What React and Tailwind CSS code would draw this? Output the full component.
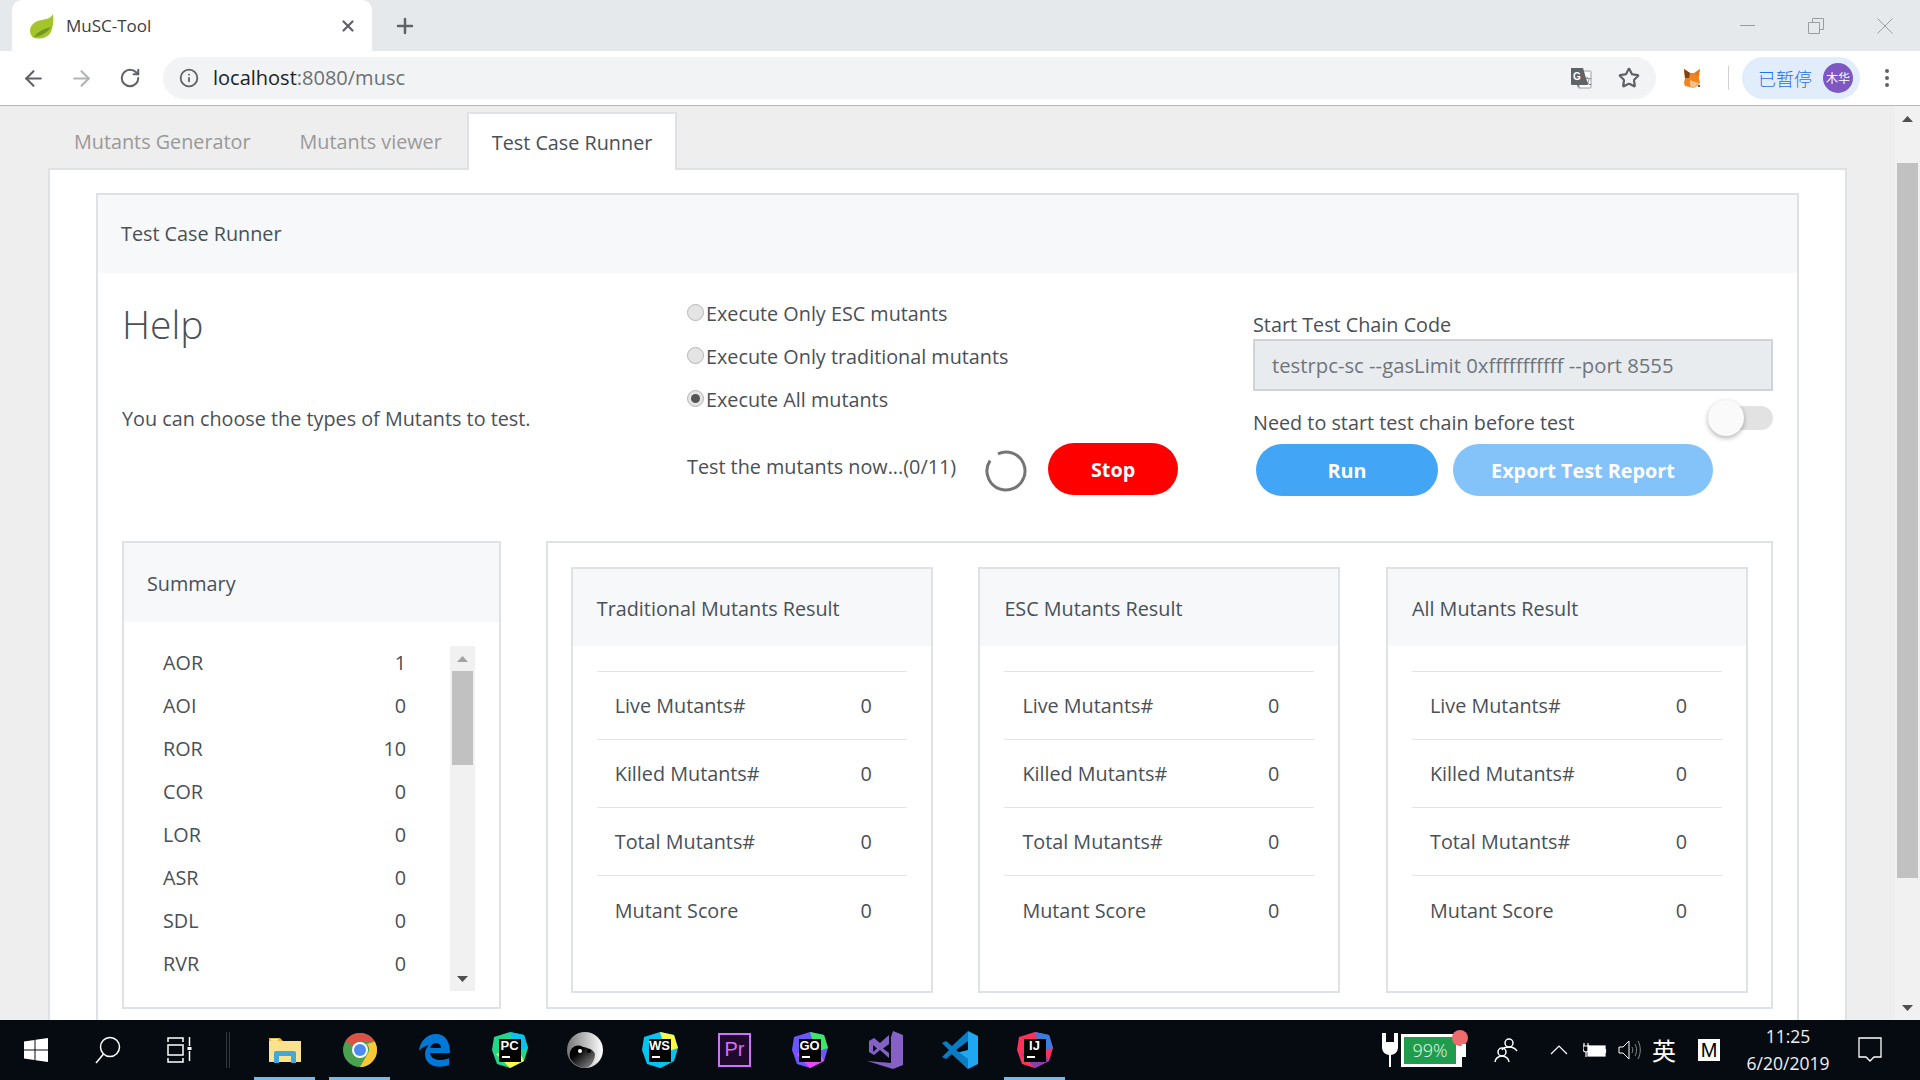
import { ArrowLeft, ArrowRight, RotateCw, Info, Star, X, Plus } from "lucide-react";

const SUMMARY = [
  ["AOR", 1], ["AOI", 0], ["ROR", 10], ["COR", 0],
  ["LOR", 0], ["ASR", 0], ["SDL", 0], ["RVR", 0],
];

const RESULT_ROWS = ["Live Mutants#", "Killed Mutants#", "Total Mutants#", "Mutant Score"];
const RESULT_CARDS = ["Traditional Mutants Result", "ESC Mutants Result", "All Mutants Result"];
const RADIOS = [
  ["Execute Only ESC mutants", false],
  ["Execute Only traditional mutants", false],
  ["Execute All mutants", true],
];

const Arrow = ({ up, cls }) => (
  <svg width="11" height="6" viewBox="0 0 11 6" className={cls}>
    <path d={up ? "M5.5 0 L11 6 L0 6 Z" : "M5.5 6 L11 0 L0 0 Z"} fill="currentColor" />
  </svg>
);

function Leaf() {
  return (
    <svg width="26" height="26" viewBox="0 0 26 26">
      <path d="M24 1c-2 4-6 5-11 6C6 8 1 12 1 18c0 3 2 6 4 7 5 1 13 1 17-6 2-5 3-12 2-18z" fill="#a4c42c" />
      <path d="M5 24c3-5 9-8 17-10-3 5-9 9-17 10z" fill="#6f9a1f" />
    </svg>
  );
}

function Fox() {
  return (
    <svg width="18" height="21" viewBox="0 0 18 21">
      <path d="M1 1l6 4h4l6-4-1 9 1 5-4 4-3 1-3-1-5-1-1-3 1-5z" fill="#f0851f" />
      <path d="M1 1l6 4-1 5-4 0z" fill="#7a4313" />
      <path d="M17 1l-5 4 3 4z" fill="#e4761b" />
      <path d="M7 12l5 2 4 1-4 4-3 1-2-3z" fill="#f6c08a" />
      <circle cx="16" cy="18" r="1" fill="#222" />
    </svg>
  );
}

function Translate() {
  return (
    <svg width="22" height="22" viewBox="0 0 22 22">
      <rect x="8" y="4" width="13" height="17" rx="1" fill="#fff" stroke="#9aa0a6" />
      <path d="M1 1h12l5 17H9l1 3-3-3H2a1 1 0 0 1-1-1z" fill="#5f6368" />
      <text x="3" y="13" fontSize="10" fontWeight="700" fill="#fff" fontFamily="Liberation Sans, sans-serif">G</text>
      <text x="13" y="17" fontSize="9" fill="#5f6368" fontFamily="Liberation Sans, sans-serif">文</text>
    </svg>
  );
}

function WinLogo() {
  return (
    <svg width="24" height="24" viewBox="0 0 24 24" fill="#fff">
      <path d="M0 3.5 10.5 2v9.5H0zM11.5 1.8 24 0v11.5H11.5zM0 12.5h10.5V22L0 20.5zM11.5 12.5H24V24l-12.5-1.8z" />
    </svg>
  );
}

function Explorer() {
  return (
    <svg width="32" height="28" viewBox="0 0 32 28">
      <path d="M0 2h11l3 3h18v21H0z" fill="#e8b83e" />
      <rect x="0" y="5" width="32" height="21" fill="#fde28c" />
      <path d="M5 27V17a2 2 0 0 1 2-2h18a2 2 0 0 1 2 2v10h-5v-7H10v7z" fill="#3fa9de" />
      <rect x="2" y="3" width="7" height="1.5" fill="#fff" />
    </svg>
  );
}

function Chrome() {
  return (
    <svg width="34" height="34" viewBox="0 0 34 34">
      <circle cx="17" cy="17" r="17" fill="#4aa14f" />
      <path d="M17 0a17 17 0 0 1 14.7 8.5H17A8.5 8.5 0 0 0 9.6 12.8L2.6 8A17 17 0 0 1 17 0z" fill="#de5245" />
      <path d="M31.7 8.5A17 17 0 0 1 17 34l7.4-12.7A8.5 8.5 0 0 0 24 11z" fill="#fcc934" />
      <circle cx="17" cy="17" r="8" fill="#fff" />
      <circle cx="17" cy="17" r="6" fill="#4b8bf4" />
    </svg>
  );
}

function Edge() {
  return (
    <svg width="32" height="34" viewBox="0 0 32 34">
      <path d="M0 18C1 7 9 1 17 1c9 0 14 7 14 19H11c1 7 10 9 19 5v7c-11 4-24 1-24-11 0-3 1-6 4-9-4 1-8 3-10 6zm11-3h11c0-6-9-7-11 0z" fill="#0078d7" />
    </svg>
  );
}

// JetBrains style tile: coloured blob behind a black square with its letters
function JetBrains({ label, a, b, c }) {
  return (
    <div className="relative w-[36px] h-[36px]">
      <svg width="36" height="36" viewBox="0 0 36 36">
        <path d="M2 5 18 0l14 3 4 13-4 13-14 7-13-4L0 18z" fill={a} />
        <path d="M18 0l14 3 4 13-12 4z" fill={b} />
        <path d="M4 22l14 14 14-7-6-12z" fill={c} />
      </svg>
      <div className="absolute left-[7px] top-[7px] w-[22px] h-[23px] bg-black text-white">
        <div className="text-[13px] leading-[14px] font-bold text-center font-['Liberation_Sans',sans-serif]">{label}</div>
        <div className="ml-[3px] mt-[3px] w-[8px] h-[2px] bg-white" />
      </div>
    </div>
  );
}

function YinYang() {
  return (
    <svg width="36" height="36" viewBox="0 0 36 36">
      <defs>
        <linearGradient id="yy" x1="0" y1="0" x2="1" y2="0">
          <stop offset="0" stopColor="#777" />
          <stop offset="1" stopColor="#fff" />
        </linearGradient>
        <linearGradient id="yy2" x1="0" y1="0" x2="1" y2="1">
          <stop offset="0.3" stopColor="#000" />
          <stop offset="1" stopColor="#999" />
        </linearGradient>
      </defs>
      <circle cx="18" cy="18" r="18" fill="url(#yy)" />
      <path d="M3 26C1 17 8 12 14 14c4 2 12 2 14 8 0 8-6 14-10 14-6 0-12-4-15-10z" fill="url(#yy2)" />
      <circle cx="13" cy="19" r="2" fill="#fff" />
      <circle cx="22" cy="19" r="2" fill="#000" />
    </svg>
  );
}

function Premiere() {
  return (
    <div className="w-[33px] h-[34px] bg-[#1f0a2e] border-2 border-[#d070ff] text-[#d070ff] text-[20px] leading-[28px] text-center font-['Liberation_Sans',sans-serif]">
      Pr
    </div>
  );
}

function VisualStudio() {
  return (
    <svg width="36" height="38" viewBox="0 0 36 38">
      <path d="M26 0l10 4v30l-10 4L0 30l24 2V6z" fill="#8661c5" />
      <path d="M2 10l5-3 6 5 9-8v23l-9-8-6 5-5-3zm4 4v7l4-3.5zm10 3.5 6 4.500v-9z" fill="#8661c5" fillRule="evenodd" />
    </svg>
  );
}

function VSCode() {
  return (
    <svg width="36" height="38" viewBox="0 0 36 38">
      <path d="M26 0l10 5v28l-10 5L10 23l16-4z" fill="#1fa8f1" />
      <path d="M26 0 10 15 4 10 0 12l7 7-7 7 4 2 6-5 16 15V28l-12-9 12-9z" fill="#0a7cc4" />
    </svg>
  );
}

const APPS = [
  { el: <Explorer />, bar: true },
  { el: <Chrome />, bar: true },
  { el: <Edge /> },
  { el: <JetBrains label="PC" a="#21d789" b="#07c3f2" c="#fcf84a" /> },
  { el: <YinYang /> },
  { el: <JetBrains label="WS" a="#07c3f2" b="#fcf84a" c="#07c3f2" /> },
  { el: <Premiere /> },
  { el: <JetBrains label="GO" a="#6b57ff" b="#3bea62" c="#f045ff" /> },
  { el: <VisualStudio /> },
  { el: <VSCode /> },
  { el: <JetBrains label="IJ" a="#fe315d" b="#3a7de0" c="#8a3fb0" />, bar: true },
];

function ResultCard({ title }) {
  return (
    <div className="w-[362px] h-[426px] border-2 border-[#dee2e6]">
      <div className="h-[77px] bg-[#f7f8fa] flex items-center px-[24px] pt-[2px]">{title}</div>
      <div className="mx-[24px] mt-[25px] border-t border-[#e4e4e4]">
        {RESULT_ROWS.map((r, i) => (
          <div key={r} className={`h-[68px] flex items-center justify-between pl-[18px] pr-[35px] pt-[1px] ${i < 3 ? "border-b border-[#e4e4e4]" : ""}`}>
            <span>{r}</span>
            <span>0</span>
          </div>
        ))}
      </div>
    </div>
  );
}

export default function App() {
  return (
    <div className="w-[1920px] h-[1080px] overflow-hidden flex flex-col text-[19.8px] text-[#495057] font-['Open_Sans',sans-serif]">
      {/* Tab strip */}
      <div className="h-[51px] bg-[#e6e9ec] flex items-center pl-[12px] shrink-0">
        <div className="w-[360px] h-[51px] bg-white rounded-t-[10px] flex items-center pl-[17px] pr-[15px] text-[17px] text-[#3c4043]">
          <Leaf />
          <span className="ml-[11px] flex-1">MuSC-Tool</span>
          <X size={18} strokeWidth={3} className="text-[#5f6368]" />
        </div>
        <Plus size={24} strokeWidth={2.5} className="ml-[21px] text-[#5f6368]" />
        <div className="ml-auto flex items-center text-[#9a9da0] pr-[27px]">
          <div className="w-[15px] h-px bg-current" />
          <svg width="16" height="16" viewBox="0 0 16 16" fill="none" stroke="currentColor" className="ml-[53px]">
            <path d="M.5 4.500h11v11H.5zM4.500 4.500v-4h11v11h-4" />
          </svg>
          <svg width="16" height="16" viewBox="0 0 16 16" stroke="currentColor" className="ml-[53px]">
            <path d="M.5.5l15 15M15.500.5l-15 15" />
          </svg>
        </div>
      </div>

      {/* Toolbar */}
      <div className="h-[55px] bg-white border-b border-[#b9b9b9] flex items-center shrink-0">
        <ArrowLeft size={25} className="ml-[21px] text-[#5f6368]" strokeWidth={2} />
        <ArrowRight size={25} className="ml-[23px] text-[#b1b4b7]" strokeWidth={2} />
        <RotateCw size={22} className="ml-[25px] text-[#5f6368]" strokeWidth={2.2} />
        <div className="ml-[22px] w-[1493px] h-[42px] rounded-full bg-[#f1f3f4] flex items-center pl-[16px] pr-[16px]">
          <Info size={20} className="text-[#5f6368]" strokeWidth={2.2} />
          <span className="ml-[14px] text-[20px] text-[#202124]">localhost<span className="text-[#6b7075]">:8080/musc</span></span>
          <div className="ml-auto"><Translate /></div>
          <Star size={22} strokeWidth={2.4} className="ml-[26px] text-[#5f6368]" />
        </div>
        <div className="ml-[27px]"><Fox /></div>
        <div className="ml-[27px] w-px h-[24px] bg-[#cfd1d3]" />
        <div className="ml-[13px] w-[118px] h-[42px] rounded-full bg-[#e1edfb] flex items-center pl-[16px] text-[18px] text-[#1a73e8] font-['Noto_Sans_CJK_SC',sans-serif]">
          <span className="font-light">已暂停</span>
          <div className="ml-[11px] w-[30px] h-[30px] rounded-full bg-[#7e57c2] text-white text-[12px] flex items-center justify-center shrink-0">木华</div>
        </div>
        <div className="ml-[25px] flex flex-col gap-[3px]">
          <div className="w-[4px] h-[4px] rounded-full bg-[#5f6368]" />
          <div className="w-[4px] h-[4px] rounded-full bg-[#5f6368]" />
          <div className="w-[4px] h-[4px] rounded-full bg-[#5f6368]" />
        </div>
      </div>

      {/* Page */}
      <div className="flex-1 min-h-0 flex overflow-hidden bg-[#eeeeee]">
        <div className="flex-1 min-w-0 pl-[48px] pt-[6px]">
          <div className="flex pl-px h-[56px] relative z-10">
            <div className="pl-[25px] pr-[24px] pt-[1px] h-[58px] flex items-center text-[#999]">Mutants Generator</div>
            <div className="pl-[25px] pr-[25px] pt-[1px] h-[58px] flex items-center text-[#999]">Mutants viewer</div>
            <div className="px-[23px] pt-[1px] h-[58px] flex items-center bg-white border-2 border-b-0 border-[#dee2e6]">Test Case Runner</div>
          </div>

          <div className="w-[1799px] bg-white border-2 border-[#dee2e6] pl-[46px] pt-[23px] pb-[40px]">
            <div className="w-[1703px] border-2 border-[#dee2e6]">
              <div className="h-[78px] bg-[#f7f8fa] flex items-center px-[23px]">Test Case Runner</div>

              <div className="px-[24px]">
                <div className="grid grid-cols-[565px_566px_520px] h-[268px]">
                  <div>
                    <div className="text-[39px] leading-[48px] font-light mt-[27px]">Help</div>
                    <div className="mt-[56px]">You can choose the types of Mutants to test.</div>
                  </div>

                  <div className="pt-[19px]">
                    {RADIOS.map(([label, on]) => (
                      <div key={label} className="h-[43px] flex items-center">
                        <div className="w-[17px] h-[17px] mb-[3px] rounded-full border border-[#b5b5b5] bg-[#e4e4e4] flex items-center justify-center">
                          {on && <div className="w-[9px] h-[9px] rounded-full bg-[#555]" />}
                        </div>
                        <span className="ml-[2px]">{label}</span>
                      </div>
                    ))}
                    <div className="mt-[22px] flex items-center">
                      <span className="mb-[5px]">Test the mutants now...(0/11)</span>
                      <svg width="42" height="42" viewBox="0 0 42 42" fill="none" className="ml-[29px] mt-[4px] -rotate-[115deg]">
                        <circle cx="21" cy="21" r="19" stroke="#757575" strokeWidth="3" strokeDasharray="108 11.400" />
                      </svg>
                      <button className="ml-[21px] w-[130px] h-[52px] pt-[1px] rounded-full bg-[#ff0000] text-white font-bold">Stop</button>
                    </div>
                  </div>

                  <div className="pt-[38px]">
                    <div className="leading-[28px]">Start Test Chain Code</div>
                    <div className="h-[52px] bg-[#e9ecef] border-2 border-[#ced4da] flex items-center pl-[17px] text-[20.3px] text-[#6f757b]">
                      testrpc-sc --gasLimit 0xfffffffffff --port 8555
                    </div>
                    <div className="mt-[14px] flex items-start justify-between">
                      <span className="leading-[36px]">Need to start test chain before test</span>
                      <div className="relative w-[65px] h-[24px] mt-[1px] rounded-full bg-[#e2e2e2]">
                        <div className="absolute left-[0px] top-[-6px] w-[36px] h-[36px] rounded-full bg-[#fafafa] shadow-[0_2px_5px_rgba(0,0,0,0.3)]" />
                      </div>
                    </div>
                    <div className="mt-[3px] ml-[3px] flex gap-[15px]">
                      <button className="w-[182px] h-[52px] pt-[2px] rounded-full bg-[#42a5f5] text-white font-bold">Run</button>
                      <button className="w-[260px] h-[52px] pt-[2px] rounded-full bg-[#84c3f9] text-white font-bold">Export Test Report</button>
                    </div>
                  </div>
                </div>

                <div className="flex gap-[45px]">
                  <div className="w-[379px] h-[468px] border-2 border-[#dee2e6] flex flex-col">
                    <div className="h-[79px] bg-[#f7f8fa] flex items-center px-[23px] pt-[2px]">Summary</div>
                    <div className="flex pt-[24px] pl-[39px]">
                      <div className="w-[243px] -mt-[5px]">
                        {SUMMARY.map(([k, v]) => (
                          <div key={k} className="h-[43px] flex items-center justify-between">
                            <span>{k}</span>
                            <span>{v}</span>
                          </div>
                        ))}
                      </div>
                      <div className="ml-[44px] w-[25px] h-[345px] bg-[#f1f1f1] flex flex-col items-center px-[2px]">
                        <div className="h-[25px] flex items-center"><Arrow up cls="text-[#a3a3a3]" /></div>
                        <div className="w-full h-[94px] bg-[#c1c1c1]" />
                        <div className="mt-auto h-[25px] flex items-center"><Arrow cls="text-[#505050]" /></div>
                      </div>
                    </div>
                  </div>

                  <div className="w-[1228px] h-[468px] border-2 border-[#dee2e6] pl-[23px] pr-[23px] pt-[24px] flex justify-between">
                    {RESULT_CARDS.map(t => <ResultCard key={t} title={t} />)}
                  </div>
                </div>
                <div className="h-[40px]" />
              </div>
            </div>
          </div>
        </div>

        {/* Page scrollbar */}
        <div className="w-[25px] bg-[#f1f1f1] flex flex-col items-center px-[2px] shrink-0">
          <div className="h-[57px] w-full flex justify-center pt-[10px]"><Arrow up cls="text-[#505050]" /></div>
          <div className="w-full h-[715px] bg-[#c1c1c1]" />
          <div className="mt-auto h-[25px] flex items-center"><Arrow cls="text-[#505050]" /></div>
        </div>
      </div>

      {/* Windows taskbar */}
      <div className="h-[60px] bg-[#060b12] flex items-center shrink-0 text-white">
        <div className="w-[72px] flex justify-center"><WinLogo /></div>
        <div className="w-[72px] flex justify-center">
          <svg width="26" height="28" viewBox="0 0 26 28" fill="none" stroke="#fff" strokeWidth="1.500">
            <circle cx="15" cy="11" r="9.500" />
            <path d="M8.500 18 1 27" />
          </svg>
        </div>
        <div className="w-[72px] flex justify-center">
          <svg width="26" height="26" viewBox="0 0 26 26" fill="none" stroke="#fff" strokeWidth="1.500">
            <path d="M1 5V1h15v4M1 21v4h15v-4M1 8h15v10H1zM22.500 0v9M22.500 14v10" />
            <rect x="20.500" y="10" width="4" height="3" fill="#fff" stroke="none" />
          </svg>
        </div>
        <div className="ml-[10px] w-[4px] h-[36px] border-x border-[#33383e]" />
        <div className="ml-[17px] flex">
          {APPS.map((a, i) => (
            <div key={i} className="relative w-[75px] h-[60px] flex items-center justify-center">
              {a.el}
              {a.bar && <div className="absolute bottom-0 left-[7px] right-[7px] h-[3px] bg-[#76b9ed]" />}
            </div>
          ))}
        </div>

        {/* Tray */}
        <div className="ml-auto flex items-center">
          <svg width="18" height="34" viewBox="0 0 18 34" fill="#fff">
            <path d="M1 0h4v9h8V0h4v15a8 8 0 0 1-7 6.900V34H8V21.900A8 8 0 0 1 1 15z" />
          </svg>
          <div className="relative ml-[2px] w-[61px] h-[33px] bg-white p-[3px] pr-[6px]">
            <div className="h-full bg-[#1f9d4d] text-[18px] leading-[27px] text-center text-[#e8f5ec] font-light">99%</div>
            <div className="absolute right-[-6px] top-[-4px] w-[16px] h-[16px] rounded-full bg-[#ee6b6e]" />
            <div className="absolute right-[-4px] top-[10px] w-[4px] h-[13px] bg-white" />
          </div>
          <svg width="24" height="26" viewBox="0 0 24 26" fill="none" stroke="#fff" strokeWidth="1.500" className="ml-[32px]">
            <circle cx="15" cy="6" r="4" />
            <path d="M8 13c1-2 3-3 7-3s6 1 8 4" />
            <circle cx="8" cy="15" r="4" />
            <path d="M1 25c0-3 3-6 7-6s7 3 7 6" />
          </svg>
          <svg width="18" height="10" viewBox="0 0 18 10" fill="none" stroke="#fff" strokeWidth="1.200" className="ml-[32px]">
            <path d="M1 9l8-8 8 8" />
          </svg>
          <svg width="24" height="16" viewBox="0 0 24 16" fill="none" stroke="#fff" strokeWidth="1.200" className="ml-[15px]">
            <rect x="5" y="4" width="17" height="10" fill="#fff" />
            <path d="M22.500 7v4M1 1v3M5 1v3M0 4h6v3a3 3 0 0 1-6 0zM3 10v5" />
          </svg>
          <svg width="24" height="22" viewBox="0 0 24 22" fill="none" stroke="#fff" strokeWidth="1" className="ml-[11px]">
            <path d="M1 8h4l6-6v18l-6-6H1z" />
            <path d="M14 8c1 2 1 4 0 6M17 5c2 4 2 8 0 12M20 2c3 5 3 13 0 18" stroke="#888" />
          </svg>
          <span className="ml-[10px] text-[24px] leading-none font-['Noto_Sans_CJK_SC',sans-serif]">英</span>
          <div className="ml-[22px] w-[22px] h-[22px] bg-white text-black text-[20px] leading-[22px] text-center font-['Liberation_Sans',sans-serif]">M</div>
          <div className="ml-[8px] w-[120px] text-center text-[17.500px] leading-[27px] text-[#f0f0f0]">
            <div>11:25</div>
            <div>6/20/2019</div>
          </div>
          <svg width="24" height="26" viewBox="0 0 24 26" fill="none" stroke="#fff" strokeWidth="1.300" className="ml-[10px] mr-[38px]">
            <path d="M1 1h22v19h-7l-4 4-4-4H1z" />
          </svg>
        </div>
      </div>
    </div>
  );
}
